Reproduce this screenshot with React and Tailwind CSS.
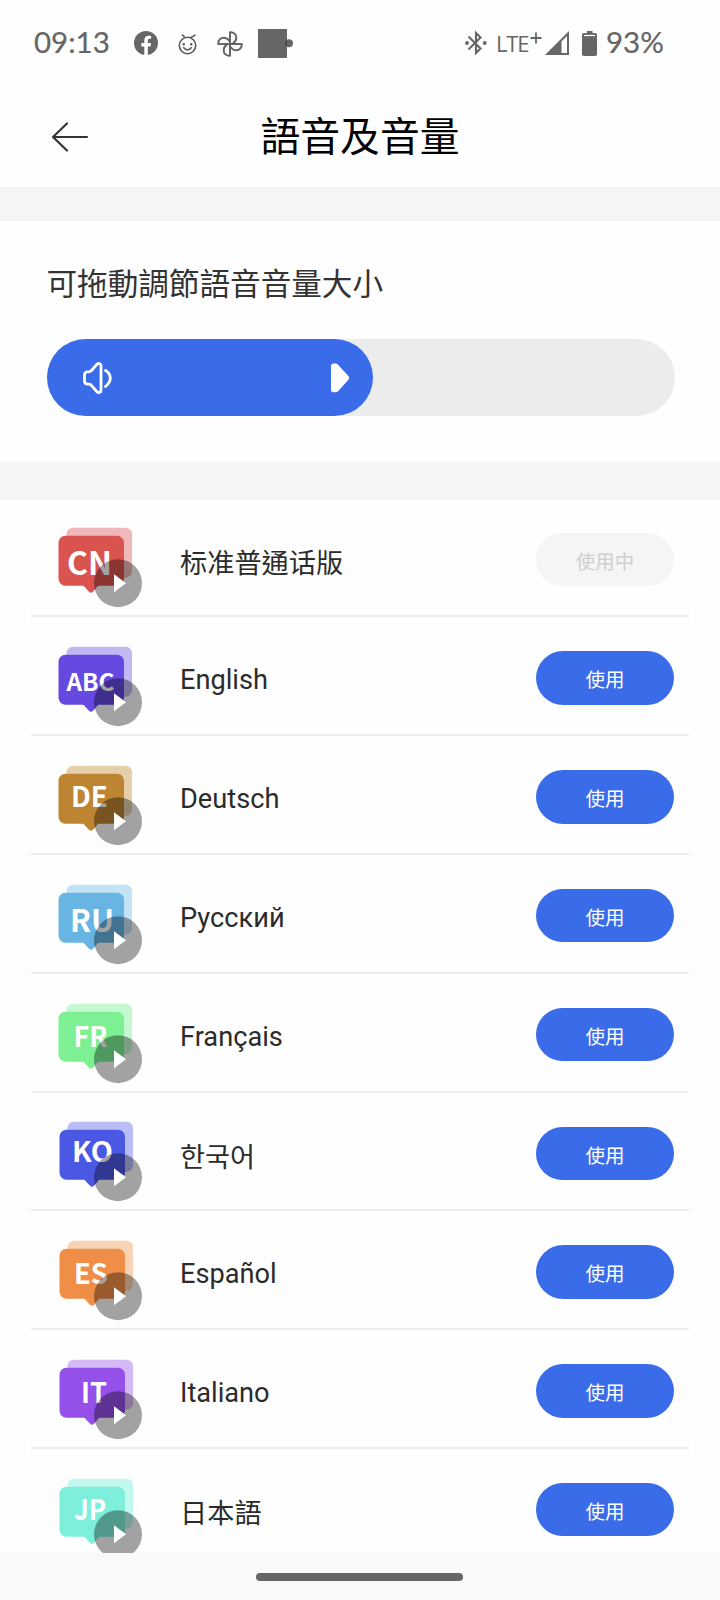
import React, { useState } from 'react';

const voices = [
  { id: 'cn', code: 'CN', name: '标准普通话版', cjk: true, color: '#d9544f', back: '#f0b8b8', size: 32, x: 9, y: 47.5, w: 45 },
  { id: 'en', code: 'ABC', name: 'English', color: '#6549e0', back: '#c2b8f3', size: 24, x: 8.5, y: 44, w: 48 },
  { id: 'de', code: 'DE', name: 'Deutsch', color: '#bd8432', back: '#e5cfab', size: 27.5, x: 13, y: 41, w: 37 },
  { id: 'ru', code: 'RU', name: 'Русский', color: '#68b5e3', back: '#c2e2f6', size: 31, x: 12, y: 47.5, w: 44 },
  { id: 'fr', code: 'FR', name: 'Français', color: '#7df094', back: '#c4f8d0', size: 28, x: 15.5, y: 43, w: 34 },
  { id: 'ko', code: 'KO', name: '한국어', cjk: true, color: '#4b58e4', back: '#b9bdf4', size: 27.5, x: 13, y: 40.5, w: 41, shift: true },
  { id: 'es', code: 'ES', name: 'Español', color: '#f08e48', back: '#f9d3b6', size: 28, x: 15, y: 43, w: 34, shift: true },
  { id: 'it', code: 'IT', name: 'Italiano', color: '#9450e8', back: '#d5b9f6', size: 28, x: 22, y: 43, w: 26, shift: true },
  { id: 'jp', code: 'JP', name: '日本語', cjk: true, color: '#7defdb', back: '#c3f8ef', size: 28.5, x: 15, y: 41, w: 32, shift: true },
];

const VoiceIcon = ({ voice }) => (
  <svg width="84" height="81" viewBox="0 -0.7 84 81" className="shrink-0">
    <g transform={voice.shift ? 'translate(1 0)' : undefined}>
      <rect x="8.5" y="0" width="65.5" height="50" rx="6.5" fill={voice.back} />
      <rect x="0.5" y="8" width="65.5" height="50" rx="7" fill={voice.color} />
      <path d="M24.5 57L31 64Q33 66 35 64L41 57Z" fill={voice.color} />
      <text
        x={voice.x}
        y={voice.y}
        textLength={voice.w}
        lengthAdjust="spacingAndGlyphs"
        fontSize={voice.size}
        fill="#fff"
        className="font-['Noto_Sans_CJK_SC',sans-serif] font-bold"
      >
        {voice.code}
      </text>
    </g>
    <circle cx="60" cy="55.5" r="24" fill="#000" fillOpacity="0.36" />
    <path d="M56 46.5L68 55.5L56 64.5Z" fill="#fff" />
  </svg>
);

const StatusBar = () => (
  <div className="flex h-[87px] items-center justify-between pl-[34px] pr-[55px] text-[#666]">
    <div className="flex items-center">
      <span className="-mt-[3px] w-[75px] font-['Lato',sans-serif] text-[29.5px] leading-none [-webkit-text-stroke:0.2px_#666]">09:13</span>
      {/* facebook */}
      <svg className="ml-[25px] -mt-px" width="24" height="24" viewBox="0 0 24 24">
        <circle cx="12" cy="12" r="12" fill="#666" />
        <path d="M10.3 24v-8.6H7.4v-3.5h2.9V9.3c0-3 1.8-4.6 4.4-4.6 1.3 0 2.4.2 2.4.2v2.9h-1.4c-1.4 0-1.9.9-1.9 1.8v2.3h3.2l-.5 3.5h-2.7V24z" fill="#fff" />
      </svg>
      {/* little face */}
      <svg className="ml-5" width="19" height="22" viewBox="0 0 19 22" fill="none" stroke="#555" strokeWidth="1.5">
        <circle cx="9.5" cy="12.5" r="8.2" />
        <path d="M6.6 4.5Q6 2.5 3.8 2M12.4 4.5Q14.5 4 17.5 1.8" />
        <path d="M5.3 14.2Q9.5 19.6 13.7 14.2" />
        <circle cx="5.8" cy="11.2" r="1.2" fill="#555" stroke="none" />
        <circle cx="13.2" cy="11.2" r="1.2" fill="#555" stroke="none" />
      </svg>
      {/* pinwheel */}
      <svg className="ml-5" width="26" height="26" viewBox="0 0 26 26" fill="none" stroke="#666" strokeWidth="2" strokeLinejoin="round">
        <path d="M13 13V1.2C17.5 1 19.3 4 19.3 6.8Q19.3 10 16 12.6" />
        <path d="M13 13H24.8C25 17.5 22 19.3 19.2 19.3Q16 19.3 13.4 16" />
        <path d="M13 13V24.8C8.5 25 6.7 22 6.7 19.2Q6.7 16 10 13.4" />
        <path d="M13 13H1.2C1 8.500 4 6.700 6.800 6.700Q10 6.700 12.600 10" />
      </svg>
      <svg className="ml-[15px]" width="36" height="29" viewBox="0 0 36 29">
        <rect width="29" height="29" fill="#666" />
        <circle cx="31" cy="14.3" r="4" fill="#666" />
        <path d="M29 10.8A4 4 0 0 0 29 17.8Z" fill="#444" />
      </svg>
    </div>
    <div className="-mt-px flex items-center">
      {/* bluetooth */}
      <svg width="22" height="26" viewBox="0 0 22 26" fill="none" stroke="#666" strokeWidth="2.1">
        <path d="M3.500 6.500L15.500 18.500L11 23V3L15.500 7.500L3.500 19.500" />
        <circle cx="2" cy="13" r="1.900" fill="#666" stroke="none" />
        <circle cx="19.800" cy="13" r="1.900" fill="#666" stroke="none" />
      </svg>
      <div className="ml-[9px] flex items-start">
        <span className="w-[34px] whitespace-nowrap font-['Open_Sans',sans-serif] text-[22px] leading-[26px] tracking-[-1.2px]">LTE</span>
        <svg className="mt-[2px]" width="12" height="12" viewBox="0 0 12 12" fill="none" stroke="#666" strokeWidth="1.800">
          <path d="M6 .5V11.500M.500 6H11.500" />
        </svg>
      </div>
      <svg className="ml-[3px]" width="24" height="24" viewBox="0 0 24 24">
        <path d="M0 24L24 0V24Z" fill="#666" />
        <path d="M16.500 10.500L22 5V22H16.500Z" fill="#fff" />
      </svg>
      <svg className="ml-[13px]" width="15" height="25" viewBox="0 0 15 25">
        <path d="M5 0h5.500v2.300H5z" fill="#666" />
        <rect y="2" width="15" height="23" rx="1.800" fill="#666" />
        <path d="M2 4.500h11" stroke="#fff" strokeWidth="1.200" />
      </svg>
      <span className="-mt-[2px] ml-[9px] w-[59px] whitespace-nowrap font-['Lato',sans-serif] text-[29.500px] leading-none [-webkit-text-stroke:0.2px_#666]">93%</span>
    </div>
  </div>
);

const VolumeSlider = ({ value }) => (
  <div className="mr-[45.500px] ml-[47px] mt-[31px] h-[77px] rounded-full bg-[#ececec]">
    <div
      className="flex h-full items-center justify-between rounded-full bg-[#3a6cea] pl-[35px] pr-[23px]"
      style={{ width: `${value}%` }}
    >
      <svg width="31" height="32" viewBox="0 0 31 32" fill="none" stroke="#fff" strokeWidth="2.800" strokeLinecap="round" strokeLinejoin="round">
        <path d="M2.500 13Q2.500 9.800 5.500 9.800H7Q8.300 9.800 9.200 8.800L15 2.300Q16 1.200 17.400 1.600Q19 2 19 3.500V28.500Q19 30 17.400 30.400Q16 30.800 15 29.700L9.200 23.200Q8.300 22.200 7 22.200H5.500Q2.500 22.200 2.500 19Z" />
        <path d="M23.500 8.500Q28.300 11.500 28.300 16T23.500 24.500" />
      </svg>
      <svg width="20" height="30" viewBox="0 0 20 30" fill="#fff">
        <path d="M1 3Q1 .5 3.500 .5H5.500Q7 .5 8 1.700L18.600 13.200Q20 14.800 18.600 16.500L8.500 27.800Q7 29.300 5.500 29.300H3.500Q1 29.300 1 26.800Z" />
      </svg>
    </div>
  </div>
);

const VoiceRow = ({ voice, active, onUse }) => (
  <div className="mx-[31px] flex h-[118.800px] shrink-0 items-end border-b-2 border-[#ececec] pl-[27px] pr-[15px] first:h-[117.400px]">
    <div className="flex h-[88px] w-full items-start">
      <VoiceIcon voice={voice} />
      <div
        className={
          voice.cjk
            ? 'ml-[38px] mt-[16.500px] flex-1 text-[27.200px] leading-[40px] text-[#2b2b2b]'
            : 'ml-[38px] mt-[14px] flex-1 text-[27.200px] leading-[40px] text-[#2b2b2b]'
        }
      >
        {voice.name}
      </div>
      <button
        onClick={onUse}
        className={
          active
            ? 'mt-[5.200px] h-[53.500px] w-[138px] rounded-full bg-[#f5f5f5] pt-[7px] text-[19.500px] leading-none text-[#cfcfcf]'
            : 'mt-[5.200px] h-[53.500px] w-[138px] rounded-full bg-[#3a6cea] pt-[6px] text-[19.500px] leading-none text-white'
        }
      >
        {active ? '使用中' : '使用'}
      </button>
    </div>
  </div>
);

const App = () => {
  const [current, setCurrent] = useState('cn');

  return (
    <div className="flex h-[1600px] w-[720px] flex-col overflow-hidden bg-[#fefefe] font-['Roboto','Noto_Sans_CJK_TC',sans-serif]">
      <StatusBar />

      {/* Header */}
      <div className="grid h-[100px] grid-cols-[120px_1fr_120px] items-center">
        <svg className="-mt-px ml-[51px]" width="38" height="30" viewBox="0 0 38 30" fill="none" stroke="#333" strokeWidth="2.200" strokeLinecap="round" strokeLinejoin="round">
          <path d="M16 1.500L2 15L16 28.500M2 15H36" />
        </svg>
        <h1 className="pt-[2px] text-center text-[39.800px] leading-none text-black">語音及音量</h1>
      </div>

      <div className="h-[34px] shrink-0 bg-[#f5f5f5]" />

      {/* Volume */}
      <div className="h-[241px] shrink-0">
        <h2 className="ml-[46.500px] mt-[41px] text-[30.600px] leading-[46px] text-[#333]">可拖動調節語音音量大小</h2>
        <VolumeSlider value={52} />
      </div>

      <div className="h-[38px] shrink-0 bg-[#f5f5f5]" />

      {/* Voice list */}
      <div className="flex min-h-0 flex-1 flex-col overflow-hidden">
        {voices.map((voice) => (
          <VoiceRow
            key={voice.id}
            voice={voice}
            active={voice.id === current}
            onUse={() => setCurrent(voice.id)}
          />
        ))}
      </div>

      {/* Gesture bar */}
      <div className="flex h-[47px] shrink-0 bg-[#f9f9f9] pl-[256px] pt-[20px]">
        <div className="h-[8px] w-[207px] rounded-full bg-[#666]" />
      </div>
    </div>
  );
};

export default App;
